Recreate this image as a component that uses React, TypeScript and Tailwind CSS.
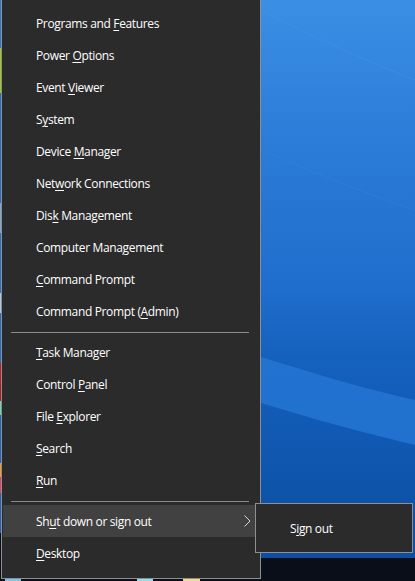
import React from "react";

type Item = { pre: string; key: string; post: string };

const group1: Item[] = [
  { pre: "Programs and ", key: "F", post: "eatures" },
  { pre: "Power ", key: "O", post: "ptions" },
  { pre: "Event ", key: "V", post: "iewer" },
  { pre: "S", key: "y", post: "stem" },
  { pre: "Device ", key: "M", post: "anager" },
  { pre: "Net", key: "w", post: "ork Connections" },
  { pre: "Dis", key: "k", post: " Management" },
  { pre: "Computer Mana", key: "g", post: "ement" },
  { pre: "", key: "C", post: "ommand Prompt" },
  { pre: "Command Prompt (", key: "A", post: "dmin)" },
];

const group2: Item[] = [
  { pre: "", key: "T", post: "ask Manager" },
  { pre: "Control ", key: "P", post: "anel" },
  { pre: "File ", key: "E", post: "xplorer" },
  { pre: "", key: "S", post: "earch" },
  { pre: "", key: "R", post: "un" },
];

function Label({ item }: { item: Item }) {
  return (
    <span className="pt-[2px] tracking-[-0.35px]">
      {item.pre}
      <span className="underline decoration-1 underline-offset-[2px]">{item.key}</span>
      {item.post}
    </span>
  );
}

function Row({ item, active, children }: { item: Item; active?: boolean; children?: React.ReactNode }) {
  return (
    <div
      className={`relative flex h-[32px] items-center pl-[33px] ${active ? "bg-[#414141]" : ""}`}
    >
      <Label item={item} />
      {children}
    </div>
  );
}

function Sep() {
  return (
    <div className="pt-[5px] pb-[3px]">
      <div className="ml-[8px] h-px w-[238px] bg-[#8a8a8a]" />
    </div>
  );
}

export default function App() {
  return (
    <div
      className="relative h-[581px] w-[415px] overflow-hidden text-[12px] text-white"
      style={{ fontFamily: '"Segoe UI", "Open Sans", "Noto Sans", sans-serif' }}
    >
      {/* wallpaper */}
      <div className="absolute inset-0 bg-[linear-gradient(180deg,#3b8fe4_0%,#2b7bd8_25%,#1f6dcc_50%,#1562bf_60%,#0f56ae_80%,#0c4c9f_100%)]" />
      <svg className="absolute inset-0" width="415" height="581" viewBox="0 0 415 581">
        <path d="M261 357 C 310 372, 360 388, 415 400 L 415 445 C 360 432, 310 418, 261 403 Z" fill="#2475d4" opacity="0.85" />
        <path d="M261 10 C 300 30, 340 50, 415 80" stroke="#4a98e8" strokeWidth="1" fill="none" opacity="0.35" />
        <path d="M261 150 C 320 175, 370 195, 415 210" stroke="#3a88dc" strokeWidth="1" fill="none" opacity="0.35" />
      </svg>
      {/* left desktop sliver */}
      <div className="absolute left-0 top-0 flex h-[581px] w-px flex-col">
        <div className="h-[48px] bg-[#2a7ad6]" />
        <div className="h-[45px] bg-[#9ccf1c]" />
        <div className="h-[110px] bg-[#1f6fd0]" />
        <div className="h-[30px] bg-[#7aa8d8]" />
        <div className="h-[60px] bg-[#2272d2]" />
        <div className="h-[20px] bg-[#aac8e8]" />
        <div className="h-[50px] bg-[#1e6ccc]" />
        <div className="h-[20px] bg-[#c01a2a]" />
        <div className="h-[18px] bg-[#b01525]" />
        <div className="h-[14px] bg-[#66ddb0]" />
        <div className="h-[48px] bg-[#1d68c6]" />
        <div className="h-[14px] bg-[#f3a020]" />
        <div className="h-[16px] bg-[#e8406a]" />
        <div className="h-[40px] bg-[#1b62bd]" />
        <div className="flex-1 bg-[#0a0e18]" />
      </div>
      {/* taskbar */}
      <div className="absolute bottom-0 left-0 right-0 h-[23px] bg-[#0a0e18]">
        <div className="absolute bottom-0 left-[5px] h-[3px] w-[16px] bg-[#7cc7ee]" />
        <div className="absolute bottom-0 left-[137px] h-[3px] w-[16px] bg-[#8fe0f0]" />
        <div className="absolute bottom-0 left-[183px] h-[3px] w-[17px] bg-[#f2dc8a]" />
      </div>

      {/* main menu */}
      <div className="absolute left-px top-0 h-[579px] w-[260px] border-x border-b border-[#8f8f8f] bg-[#2b2b2b] pt-[7px]">
        <div className="ml-[1px] mr-[3px]">
          {group1.map((it) => (
            <Row key={it.pre + it.key} item={it} />
          ))}
          <Sep />
          {group2.map((it) => (
            <Row key={it.pre + it.key} item={it} />
          ))}
          <Sep />
          <Row item={{ pre: "Sh", key: "u", post: "t down or sign out" }} active>
            <svg className="absolute left-[241px] top-[10px]" width="7" height="12" viewBox="0 0 7 12">
              <polyline points="0.5,0.5 6,6 0.5,11.5" fill="none" stroke="#d8d8d8" strokeWidth="1" />
            </svg>
          </Row>
          <Row item={{ pre: "", key: "D", post: "esktop" }} />
        </div>
      </div>

      {/* submenu */}
      <div className="absolute left-[255px] top-[503px] flex h-[50px] w-[158px] items-center border border-[#8f8f8f] bg-[#2b2b2b] pl-[34px]">
        <Label item={{ pre: "S", key: "i", post: "gn out" }} />
      </div>
    </div>
  );
}
